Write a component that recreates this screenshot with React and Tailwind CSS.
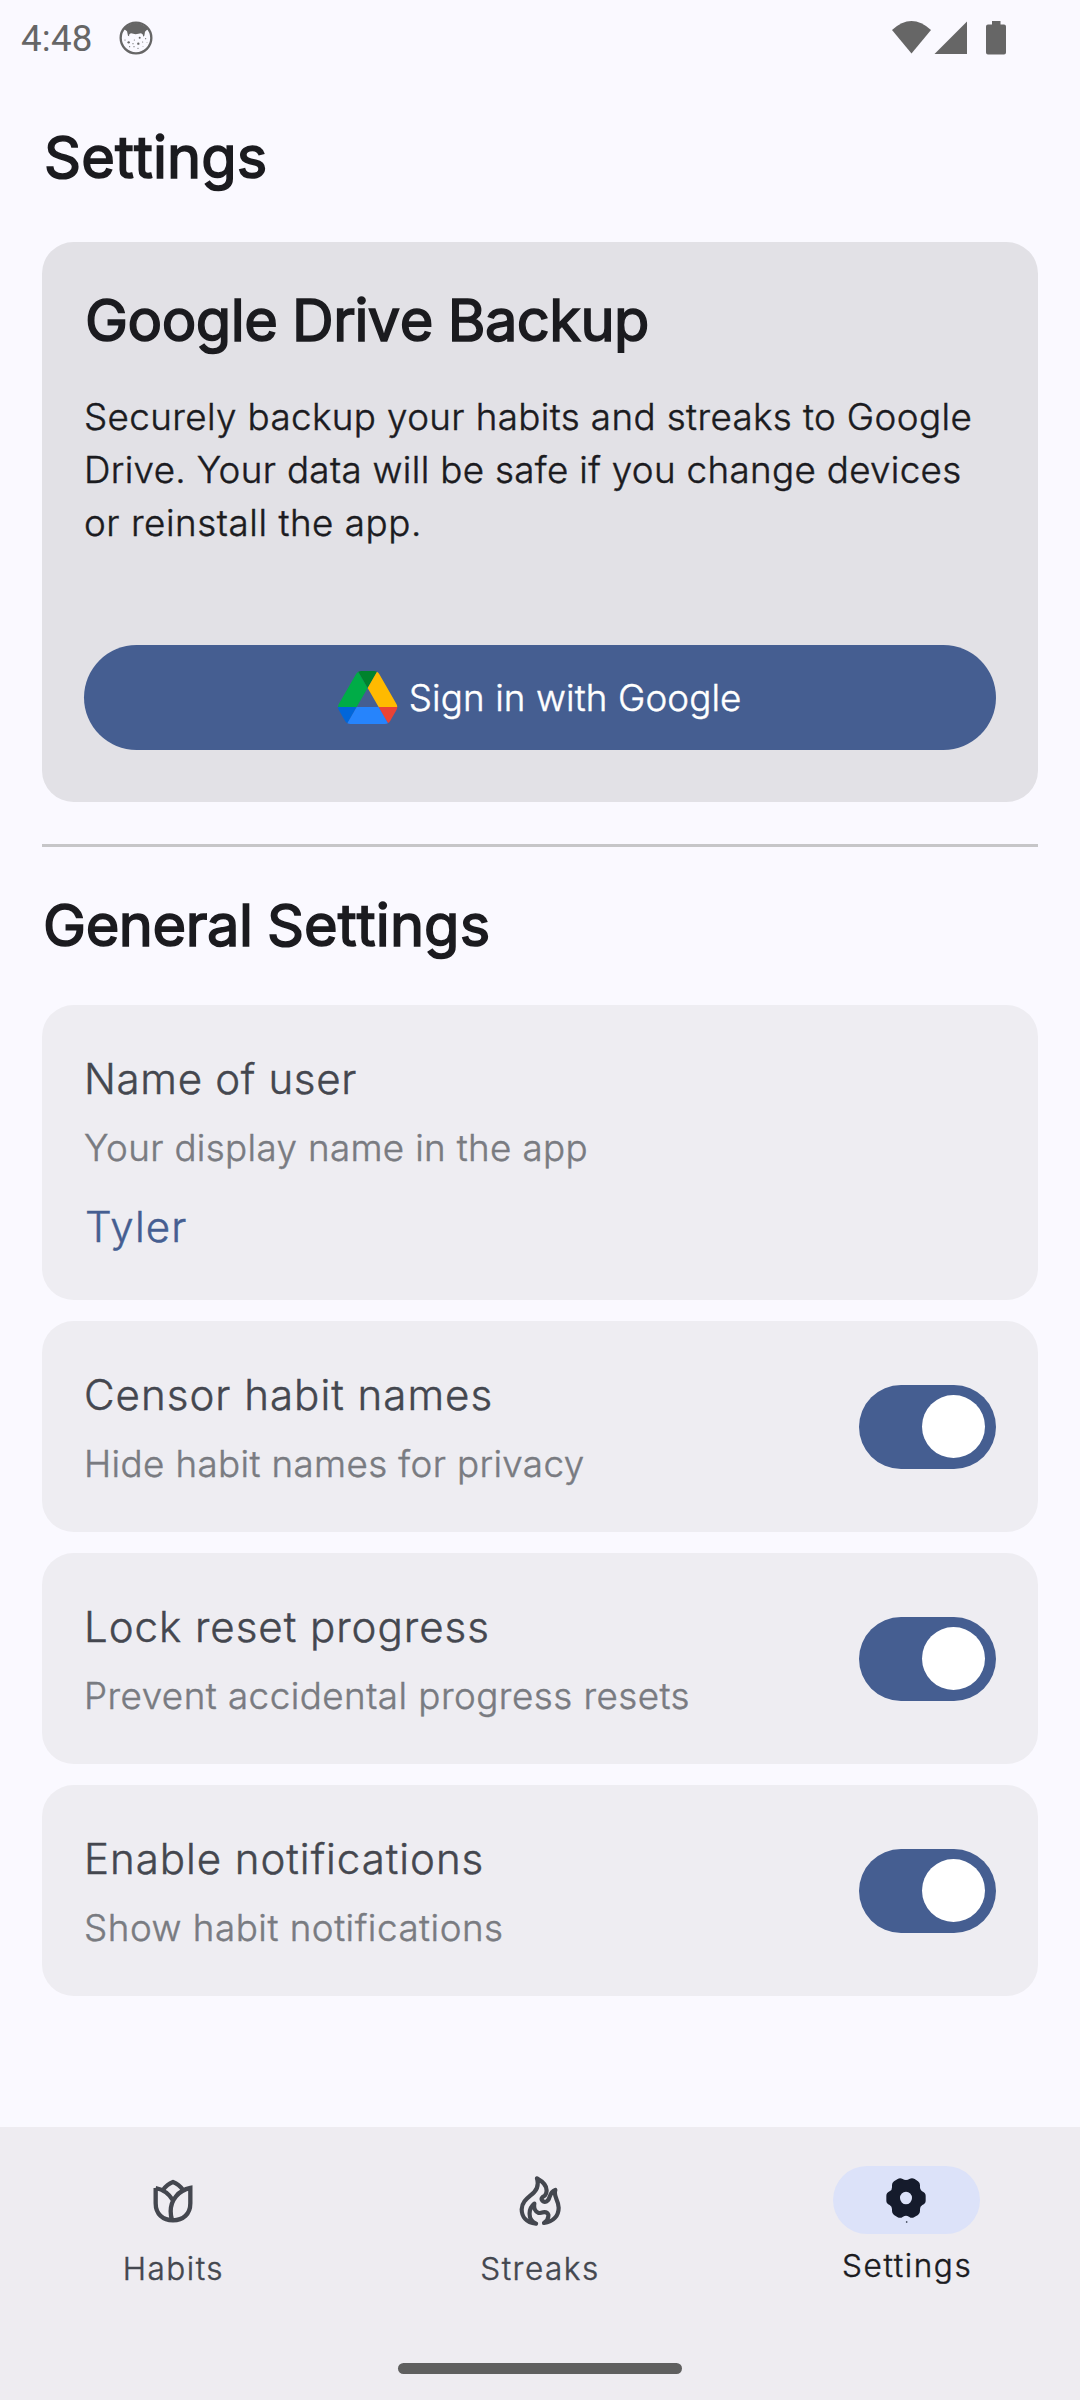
const Status = () => (
  <header className="flex h-[76px] items-center justify-between pl-[21px] pr-[72px] text-[#666666] [-webkit-text-stroke-width:0px]">
    <div className="flex items-center">
      <span className="w-[98px] pt-[2px] font-['Roboto',sans-serif] text-[36.75px] leading-[74px] font-normal tracking-[0.2px]">4:48</span>
      <svg className="size-[34px]" viewBox="0 0 102 102">
        <circle cx="51" cy="51" r="46" fill="none" stroke="currentColor" strokeWidth="7" />
        <path d="M14 24Q50-12 88 24Q82 27 78 32L76 44L72 47Q74 40 66 37L50 40L36 37Q28 40 31 46L27 44L24 31Q19 27 14 24Z" fill="currentColor" />
        <g fill="currentColor">
          <circle cx="29" cy="64" r="3.5" /><circle cx="58" cy="68" r="3.5" /><circle cx="62" cy="50" r="3" />
          <circle cx="46" cy="57" r="1.7" /><circle cx="42" cy="68" r="1.7" /><circle cx="18" cy="57" r="1.7" />
          <circle cx="80" cy="53" r="1.7" /><circle cx="71" cy="63" r="1.7" /><circle cx="84" cy="64" r="1.3" />
          <circle cx="45" cy="77" r="1.7" /><circle cx="32" cy="77" r="1.7" /><circle cx="57" cy="82" r="1.7" />
          <circle cx="72" cy="77" r="1.3" />
        </g>
      </svg>
    </div>
    <svg className="h-[34px] w-[116px]" viewBox="0 0 116 34" fill="currentColor">
      <path d="M0 9Q19.500-9 39 9L19.500 32.500Z" />
      <path d="M75 .5V33H42.500Z" />
      <path d="M100 0h8.500v3.500h3.500q2 0 2 2V31.500q0 2-2 2H96q-2 0-2-2V5.500q0-2 2-2h4Z" />
    </svg>
  </header>
);

const Heading = ({ className, children }) => (
  <h2 className={"text-[57.75px] leading-[73.5px] font-normal text-[#1b1b1f] [font-kerning:none] [-webkit-text-stroke:1.6px_#1b1b1f] " + className}>
    {children}
  </h2>
);

const DriveLogo = () => (
  <svg className="h-[53px] w-[59.3px]" viewBox="0 0 87.3 78">
    <path fill="#0066da" d="m6.600 66.850 3.850 6.650c.8 1.400 1.950 2.500 3.300 3.300l13.750-23.800h-27.500c0 1.550.4 3.100 1.200 4.500z" />
    <path fill="#00ac47" d="m43.650 25-13.750-23.800c-1.350.8-2.500 1.900-3.300 3.300l-25.400 44a9.060 9.060 0 0 0 -1.200 4.500h27.500z" />
    <path fill="#ea4335" d="m73.550 76.800c1.350-.8 2.500-1.900 3.300-3.300l1.600-2.750 7.650-13.250c.8-1.400 1.200-2.950 1.200-4.500h-27.502l5.852 11.500z" />
    <path fill="#00832d" d="m43.650 25 13.750-23.800c-1.350-.8-2.900-1.200-4.500-1.200h-18.500c-1.600 0-3.150.45-4.500 1.200z" />
    <path fill="#2684fc" d="m59.800 53h-32.300l-13.750 23.800c1.350.8 2.900 1.200 4.500 1.200h50.800c1.600 0 3.150-.45 4.500-1.200z" />
    <path fill="#ffba00" d="m73.400 26.500-12.700-22c-.8-1.400-1.950-2.500-3.300-3.300l-13.750 23.800 16.150 28h27.450c0-1.550-.4-3.100-1.200-4.500z" />
  </svg>
);

const Labels = ({ title, detail, titleClass, detailClass }) => (
  <div className="whitespace-nowrap">
    <div className={"text-[42px] leading-[63px] text-[#44474f] " + titleClass}>{title}</div>
    <div className={"mt-[12px] text-[36.75px] leading-[52.5px] text-[#797b81] " + detailClass}>{detail}</div>
  </div>
);

const ToggleCard = (props) => (
  <section className="flex h-[211px] items-center justify-between rounded-[31.5px] bg-[#eeedf2] px-[42px]">
    <Labels {...props} />
    <div className="flex h-[84px] w-[137px] items-center justify-end rounded-full bg-[#455e91] pr-[11px]">
      <div className="size-[63px] rounded-full bg-white" />
    </div>
  </section>
);

const TulipIcon = () => (
  <svg className="h-[44px] w-[40px]" viewBox="160 87 120 132" fill="none" stroke="currentColor" strokeWidth="13">
    <path d="M168 114V160C168 193 190 211 220 211S272 193 272 160V114C236 121 213 150 213 184Q213 198 217 210M168 114Q202 121 220 151" />
    <path d="M190 120Q202 103 220 96Q238 103 250 120" />
  </svg>
);

const FlameIcon = () => (
  <svg className="h-[50px] w-[42px]" viewBox="178 76 126 150" fill="none" stroke="currentColor" strokeWidth="12.5" strokeLinecap="round" strokeLinejoin="round">
    <path d="M229 219C198 216 186 196 186 176C187 149 210 139 224 124Q239 108 232 83Q268 103 259 129Q257 136 249 139C241 147 251 157 261 152C274 146 265 127 287 118C280 138 297 148 297 171C297 195 281 214 253 217Q268 206 266 192C260 176 242 189 237 187C226 183 222 171 224 159C211 170 209 182 210 192Q210 209 229 219" />
  </svg>
);

const FlowerIcon = () => (
  <svg className="h-[46px] w-[40px]" viewBox="229 174 120 138" fill="currentColor">
    <path fillRule="evenodd" d="M289 180Q295 180 299 177Q307 172 315 177L325 184Q332 189 331 198Q330 209 336 213Q348 218 348 227V242Q348 251 338 255Q330 260 331 270Q332 280 325 285L313 292Q306 296 298 290Q289 285 280 290Q272 296 264 292L253 285Q246 280 247 270Q248 260 240 255Q230 251 230 242V227Q230 218 241 213Q248 209 247 198Q246 189 253 184L264 177Q271 172 279 177Q283 180 289 180ZM271 234a18 19 0 1 0 36 0a18 19 0 1 0-36 0Z" />
    <circle cx="291" cy="306" r="2.500" />
  </svg>
);

const NavItem = ({ label, icon, active }) => (
  <div className={active ? "flex flex-1 flex-col items-center pt-[39px] text-[#1b1b1f]" : "flex flex-1 flex-col items-center pt-[40px] text-[#44474f]"}>
    <div className={active ? "flex h-[68px] w-[147px] items-center justify-center rounded-full bg-[#dce2f9] pt-[2px] pr-[1px] text-[#151b2c]" : "flex h-[68px] w-[147px] items-center justify-center"}>
      {icon}
    </div>
    <span className={active ? "mt-[11px] pl-[1px] text-[31.5px] leading-[42px] tracking-[1.6px]" : "mt-[13px] text-[31.5px] leading-[42px] tracking-[1.5px]"}>{label}</span>
  </div>
);

export default function App() {
  return (
    <div className="flex h-[2400px] w-[1080px] flex-col overflow-hidden bg-[#faf9ff] font-['Inter',sans-serif] font-light [-webkit-text-stroke-width:0.45px]">
      <Status />
      <main className="flex flex-1 flex-col px-[42px] pt-[45px]">
        <Heading className="pl-[2px] tracking-[0.1px]">Settings</Heading>
        <section className="mt-[47.5px] h-[560px] rounded-[31.5px] bg-[#e2e1e6] p-[42px]">
          <Heading className="pl-[1px] tracking-[-0.52px] [word-spacing:-1px]">Google Drive Backup</Heading>
          <p className="mt-[32px] h-[255.5px] whitespace-nowrap text-[36.75px] leading-[53px] text-[#1b1b1f]">
            <span className="tracking-[0.39px]">Securely backup your habits and streaks to Google</span><br />
            <span className="tracking-[0.33px]">Drive. Your data will be safe if you change devices</span><br />
            <span className="tracking-[0.55px]">or reinstall the app.</span>
          </p>
          <button className="flex h-[105px] w-full items-center justify-center gap-[11px] rounded-full bg-[#455e91] text-[36.75px] tracking-[0.1px] text-white">
            <DriveLogo />
            <span>Sign in with Google</span>
          </button>
        </section>
        <div className="mt-[42px] h-[3px] bg-[#c6c6c8]" />
        <div className="mt-[42px]">
          <Heading className="pl-[1px] tracking-[0.1px] [word-spacing:-2px]">
            <span className="tracking-[-0.45px]">General</span> Settings
          </Heading>
        </div>
        <div className="mt-[42.5px] flex flex-col gap-[21px]">
          <section className="h-[295px] rounded-[31.5px] bg-[#eeedf2] p-[42px]">
            <Labels title="Name of user" titleClass="tracking-[0.68px]" detail="Your display name in the app" detailClass="tracking-[0.35px]" />
            <div className="mt-[20px] pl-[1px] text-[42px] leading-[63px] tracking-[1.15px] text-[#455e91]">Tyler</div>
          </section>
          <ToggleCard title="Censor habit names" titleClass="tracking-[1.02px]" detail="Hide habit names for privacy" detailClass="tracking-[0.38px]" />
          <ToggleCard title="Lock reset progress" titleClass="tracking-[0.98px]" detail="Prevent accidental progress resets" detailClass="tracking-[0.47px]" />
          <ToggleCard title="Enable notifications" titleClass="tracking-[0.97px]" detail="Show habit notifications" detailClass="tracking-[0.51px]" />
        </div>
      </main>
      <footer className="flex h-[273px] flex-col items-center justify-between bg-[#eeecf1] pb-[26px]">
        <nav className="flex w-full gap-[20px]">
          <NavItem label="Habits" icon={<TulipIcon />} />
          <NavItem label="Streaks" icon={<FlameIcon />} />
          <NavItem label="Settings" icon={<FlowerIcon />} active />
        </nav>
        <div className="h-[11px] w-[284px] rounded-full bg-[#5f5f5f]" />
      </footer>
    </div>
  );
}
